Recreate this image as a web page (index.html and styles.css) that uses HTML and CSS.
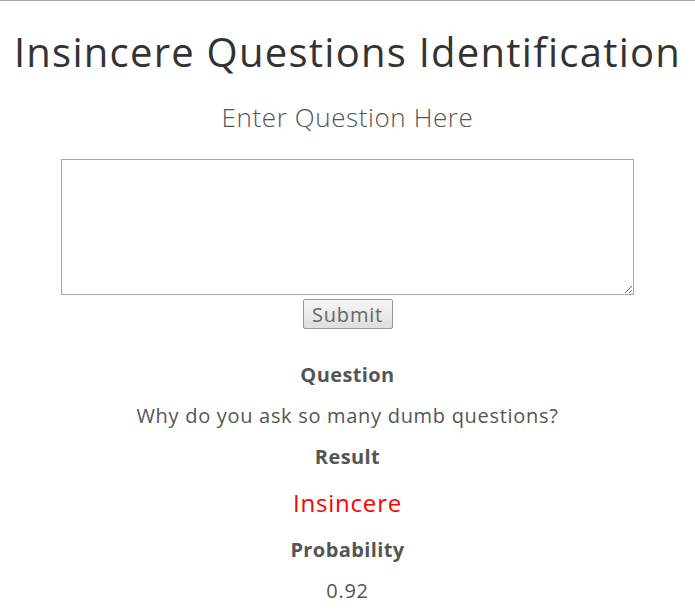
FILE: index.html
```html
<!DOCTYPE html>
<html>
<head>
<meta charset="utf-8">
<link rel="stylesheet" href="styles.css">
</head>
<body>
<div class="page">
  <h1 class="title">Insincere Questions Identification</h1>
  <h2 class="prompt">Enter Question Here</h2>
  <form class="form">
    <textarea class="input"></textarea>
    <button type="button" class="submit">Submit</button>
  </form>
  <div class="results">
    <div class="label">Question</div>
    <div class="value">Why do you ask so many dumb questions?</div>
    <div class="label">Result</div>
    <div class="verdict">Insincere</div>
    <div class="label">Probability</div>
    <div class="value">0.92</div>
  </div>
</div>
</body>
</html>
```
FILE: styles.css
```css
html, body {
  margin: 0;
  padding: 0;
  background: #fff;
}
body {
  border-top: 1px solid #a9a9a9;
  font-family: "Open Sans", "Noto Sans", sans-serif;
  color: #555;
}
.page {
  display: flex;
  flex-direction: column;
  align-items: center;
}
.title {
  margin: 27px 0 0;
  font-size: 40px;
  line-height: 48px;
  font-weight: 400;
  letter-spacing: 1.25px;
  color: #333;
  white-space: nowrap;
}
.prompt {
  margin: 25px 0 0;
  font-size: 26px;
  line-height: 32px;
  font-weight: 300;
  letter-spacing: 0.6px;
  color: #555;
}
.form {
  margin-top: 26px;
  display: flex;
  flex-direction: column;
  align-items: center;
  gap: 4px;
}
.input {
  box-sizing: border-box;
  width: 573px;
  height: 136px;
  margin: 0;
  border: 1px solid #a9a9a9;
  resize: both;
}
.submit {
  box-sizing: border-box;
  width: 90px;
  height: 30px;
  margin: 0;
  padding: 0;
  font-family: inherit;
  font-size: 20px;
  letter-spacing: 0.8px;
  color: #666;
  border: 1px solid #999;
  border-radius: 2px;
  background: linear-gradient(#f6f6f6, #dedede);
}
.results {
  margin-top: 25px;
  display: flex;
  flex-direction: column;
  align-items: center;
}
.label {
  font-size: 20px;
  line-height: 41px;
  font-weight: 700;
  letter-spacing: 0.4px;
  color: #555;
}
.value {
  font-size: 20px;
  line-height: 41px;
  letter-spacing: 0.7px;
  color: #555;
}
.verdict {
  font-size: 24px;
  line-height: 52px;
  letter-spacing: 0.8px;
  color: #f00;
}
```
